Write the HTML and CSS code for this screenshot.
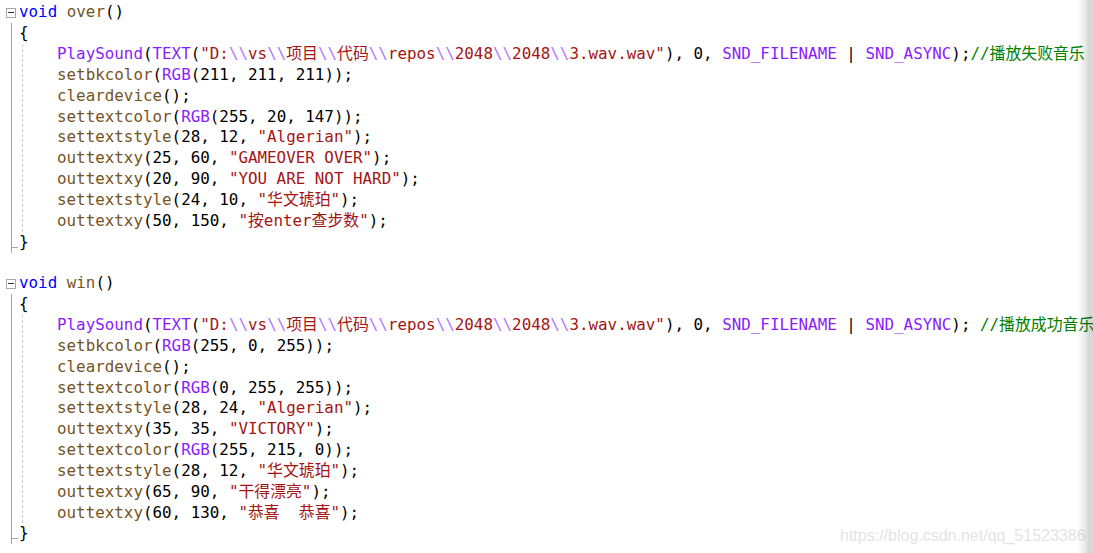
FILE: index.html
```html
<!DOCTYPE html>
<html>
<head>
<meta charset="utf-8">
<link rel="stylesheet" href="styles.css">
</head>
<body>
<div class="editor">
  <div class="fold">
    <div class="line head"><span class="box"><span class="minus"></span></span><span class="code"><span class="kw">void</span> <span class="fn">over</span>()</span></div>
    <div class="body">
      <div class="line">{</div>
      <div class="block">
        <div class="line"><span class="mc">PlaySound</span>(<span class="mc">TEXT</span>(<span class="st">"D:</span><span class="es">\\</span><span class="st">vs</span><span class="es">\\</span><span class="st">项目</span><span class="es">\\</span><span class="st">代码</span><span class="es">\\</span><span class="st">repos</span><span class="es">\\</span><span class="st">2048</span><span class="es">\\</span><span class="st">2048</span><span class="es">\\</span><span class="st">3.wav.wav"</span>), 0, <span class="mc">SND_FILENAME</span> | <span class="mc">SND_ASYNC</span>);<span class="cm">//播放失败音乐</span></div>
        <div class="line"><span class="fn">setbkcolor</span>(<span class="mc">RGB</span>(211, 211, 211));</div>
        <div class="line"><span class="fn">cleardevice</span>();</div>
        <div class="line"><span class="fn">settextcolor</span>(<span class="mc">RGB</span>(255, 20, 147));</div>
        <div class="line"><span class="fn">settextstyle</span>(28, 12, <span class="st">"Algerian"</span>);</div>
        <div class="line"><span class="fn">outtextxy</span>(25, 60, <span class="st">"GAMEOVER OVER"</span>);</div>
        <div class="line"><span class="fn">outtextxy</span>(20, 90, <span class="st">"YOU ARE NOT HARD"</span>);</div>
        <div class="line"><span class="fn">settextstyle</span>(24, 10, <span class="st">"华文琥珀"</span>);</div>
        <div class="line"><span class="fn">outtextxy</span>(50, 150, <span class="st">"按enter查步数"</span>);</div>
      </div>
      <div class="line">}</div>
    </div>
  </div>
  <div class="line"> </div>
  <div class="fold">
    <div class="line head"><span class="box"><span class="minus"></span></span><span class="code"><span class="kw">void</span> <span class="fn">win</span>()</span></div>
    <div class="body">
      <div class="line">{</div>
      <div class="block">
        <div class="line"><span class="mc">PlaySound</span>(<span class="mc">TEXT</span>(<span class="st">"D:</span><span class="es">\\</span><span class="st">vs</span><span class="es">\\</span><span class="st">项目</span><span class="es">\\</span><span class="st">代码</span><span class="es">\\</span><span class="st">repos</span><span class="es">\\</span><span class="st">2048</span><span class="es">\\</span><span class="st">2048</span><span class="es">\\</span><span class="st">3.wav.wav"</span>), 0, <span class="mc">SND_FILENAME</span> | <span class="mc">SND_ASYNC</span>); <span class="cm">//播放成功音乐</span></div>
        <div class="line"><span class="fn">setbkcolor</span>(<span class="mc">RGB</span>(255, 0, 255));</div>
        <div class="line"><span class="fn">cleardevice</span>();</div>
        <div class="line"><span class="fn">settextcolor</span>(<span class="mc">RGB</span>(0, 255, 255));</div>
        <div class="line"><span class="fn">settextstyle</span>(28, 24, <span class="st">"Algerian"</span>);</div>
        <div class="line"><span class="fn">outtextxy</span>(35, 35, <span class="st">"VICTORY"</span>);</div>
        <div class="line"><span class="fn">settextcolor</span>(<span class="mc">RGB</span>(255, 215, 0));</div>
        <div class="line"><span class="fn">settextstyle</span>(28, 12, <span class="st">"华文琥珀"</span>);</div>
        <div class="line"><span class="fn">outtextxy</span>(65, 90, <span class="st">"干得漂亮"</span>);</div>
        <div class="line"><span class="fn">outtextxy</span>(60, 130, <span class="st">"恭喜  恭喜"</span>);</div>
      </div>
      <div class="line">}</div>
    </div>
  </div>
</div>
<div class="watermark">https://blog.csdn.net/qq_51523386</div>
<div class="edge"></div>
</body>
</html>
```

FILE: styles.css
```css
html, body {
  margin: 0;
  padding: 0;
  background: #ffffff;
  width: 1093px;
  height: 553px;
  overflow: hidden;
}
body {
  position: relative;
}
.editor {
  padding-top: 2.4px;
  font-family: "DejaVu Sans Mono", "Noto Sans CJK SC", monospace;
  font-size: 15.86px;
  color: #000000;
}
.line {
  height: 20.85px;
  line-height: 20.85px;
  white-space: pre;
}
.head {
  display: flex;
  align-items: center;
}
.code {
  white-space: pre;
}
.box {
  box-sizing: border-box;
  width: 10px;
  height: 10px;
  margin-left: 6px;
  margin-right: 3px;
  border: 1px solid #a8a8a8;
  display: flex;
  align-items: center;
  justify-content: center;
  flex: none;
}
.minus {
  width: 6px;
  height: 1px;
  background: #333333;
}
.body {
  position: relative;
  margin-left: 11px;
  border-left: 1px solid #a5a5a5;
  padding-left: 7px;
}
.body::after {
  content: "";
  position: absolute;
  left: 0;
  bottom: 5px;
  width: 6px;
  height: 1px;
  background: #a5a5a5;
}
.block {
  margin-left: 3px;
  border-left: 1px dashed #cfcfcf;
  padding-left: 34px;
}
.kw { color: #0000ff; }
.fn { color: #74531f; }
.mc { color: #8a1bff; }
.st { color: #a31515; }
.es { color: #b776fb; }
.cm { color: #008000; }
.watermark {
  position: absolute;
  left: 840px;
  top: 527px;
  font-family: "Liberation Sans", Arial, sans-serif;
  font-size: 16px;
  color: #e4e4e4;
  white-space: nowrap;
}
.edge {
  position: absolute;
  top: 0;
  right: 0;
  width: 16px;
  height: 553px;
  background: linear-gradient(to right, rgba(0,0,0,0) 0%, rgba(0,0,0,0.06) 40%, rgba(0,0,0,0.16) 75%, rgba(0,0,0,0.15) 100%);
}
```
